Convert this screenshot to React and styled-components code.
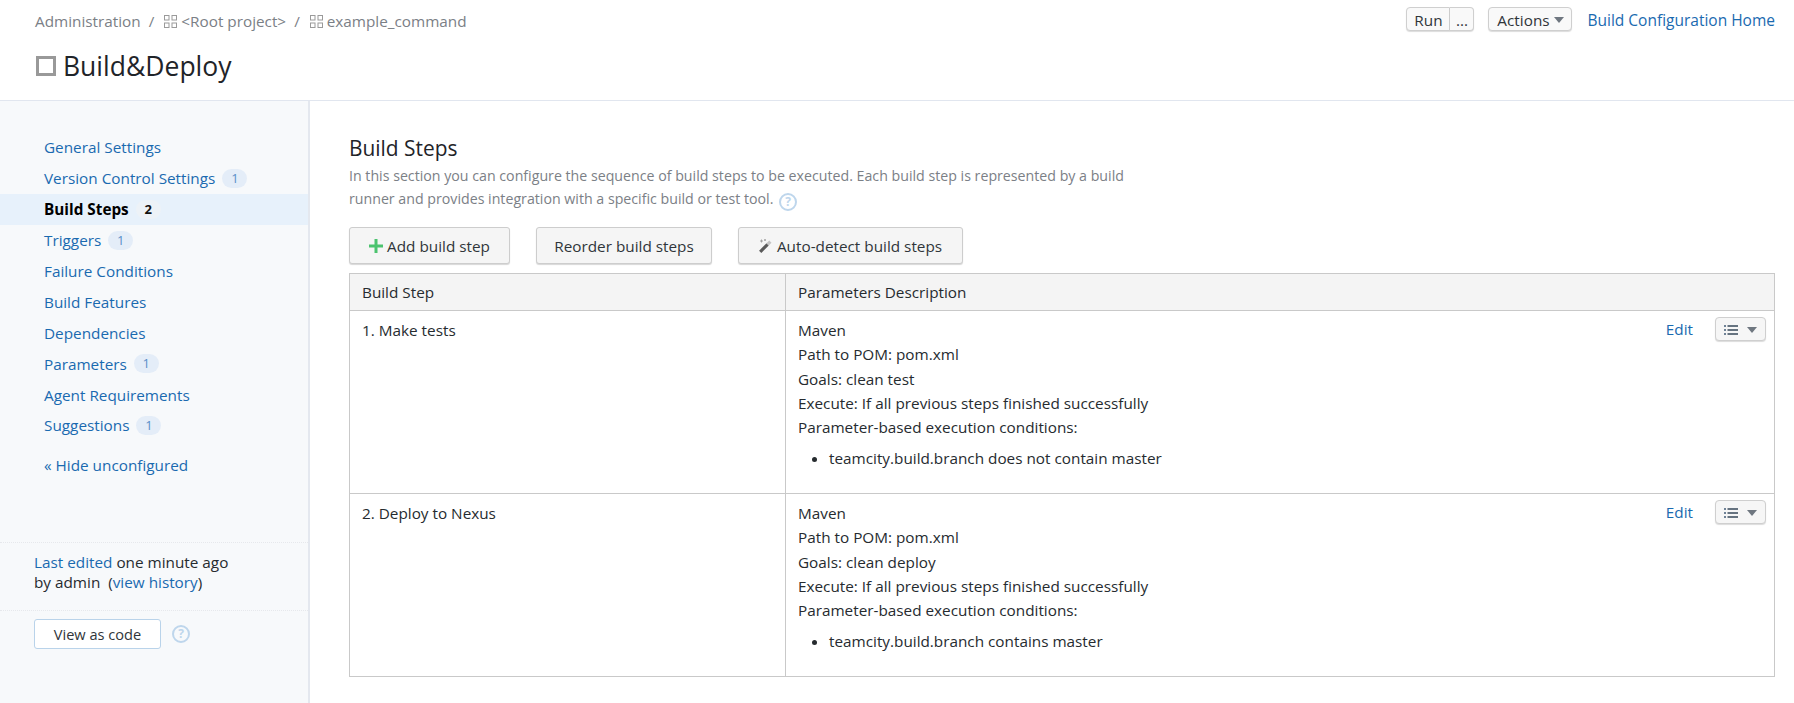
import styled, { createGlobalStyle } from "styled-components";

const GlobalStyle = createGlobalStyle`
  html, body { margin: 0; padding: 0; background: #fff; }
  body {
    font-family: "Open Sans", "Noto Sans", "Liberation Sans", sans-serif;
    font-size: 15.3px;
    color: #262b2f;
  }
  a { color: #1a6ab0; text-decoration: none; }
`;

const navItems = [
  { label: "General Settings" },
  { label: "Version Control Settings", count: 1 },
  { label: "Build Steps", count: 2, active: true },
  { label: "Triggers", count: 1 },
  { label: "Failure Conditions" },
  { label: "Build Features" },
  { label: "Dependencies" },
  { label: "Parameters", count: 1 },
  { label: "Agent Requirements" },
  { label: "Suggestions", count: 1 },
];

const steps = [
  { name: "1. Make tests", goal: "clean test", condition: "teamcity.build.branch does not contain master" },
  { name: "2. Deploy to Nexus", goal: "clean deploy", condition: "teamcity.build.branch contains master" },
];

const Page = styled.div`
  width: 1794px;
  height: 703px;
  display: flex;
  flex-direction: column;
  overflow: hidden;
`;

const Header = styled.header`
  height: 101px;
  flex: none;
  box-sizing: border-box;
  border-bottom: 1px solid #e1e6ef;
  padding: 7px 19px 0 35px;
  display: flex;
  justify-content: space-between;
  align-items: flex-start;
`;

const TitleBlock = styled.div`
  display: flex;
  flex-direction: column;
  padding-top: 4px;
`;

const Crumbs = styled.div`
  display: flex;
  align-items: center;
  height: 20px;
  color: #7b8086;
`;

const CrumbSep = styled.span`
  margin: 0 10px 0 8px;
`;

const ProjectIcon = styled.svg`
  width: 13px;
  height: 13px;
  margin-right: ${(p) => p.$gap}px;
  flex: none;
`;

const PageTitle = styled.h1`
  display: flex;
  align-items: center;
  margin: 16px 0 0;
  font-size: 26.5px;
  line-height: 38px;
  font-weight: 400;
  color: #1f2429;
`;

const TitleBox = styled.span`
  width: 20px;
  height: 20px;
  box-sizing: border-box;
  border: 3px solid #999;
  margin: 0 7px 0 1px;
  flex: none;
`;

const Actions = styled.div`
  display: flex;
  align-items: center;
  height: 24px;
`;

const SmallButton = styled.button`
  height: 24px;
  width: ${(p) => p.$width}px;
  box-sizing: border-box;
  padding: 1px 0 0;
  font: inherit;
  color: #30353a;
  background: #f9f9f9;
  border: 1px solid #cfcfcf;
  border-radius: ${(p) => p.$radius || "4px"};
  box-shadow: 0 1px 1px rgba(0, 0, 0, 0.14);
  display: flex;
  align-items: center;
  justify-content: center;
  gap: 4px;
  ${(p) => p.$joined && "border-left: none;"}
`;

const ButtonGroup = styled.div`
  display: flex;
  margin-right: 14px;
`;

const HomeLink = styled.a`
  margin: 2px 0 0 15px;
  font-size: 15.5px;
`;

const Body = styled.div`
  flex: 1;
  display: flex;
  min-height: 0;
`;

const Sidebar = styled.aside`
  width: 310px;
  flex: none;
  box-sizing: border-box;
  background: #f7f9fb;
  border-right: 2px solid #e4e8ef;
  padding-top: 31px;
  display: flex;
  flex-direction: column;
`;

const NavList = styled.nav`
  display: flex;
  flex-direction: column;
`;

const NavRow = styled.a`
  height: 30.9px;
  display: flex;
  align-items: center;
  gap: 7px;
  padding-left: 44px;
  color: ${(p) => (p.$active ? "#000" : "#1a6ab0")};
  font-weight: ${(p) => (p.$active ? 700 : 400)};
  background: ${(p) => (p.$active ? "#e7f1fb" : "transparent")};
`;

const Count = styled.span`
  min-width: 25px;
  height: 19px;
  box-sizing: border-box;
  border-radius: 10px;
  text-align: center;
  font-size: 13px;
  line-height: 19px;
  font-weight: ${(p) => (p.$active ? 700 : 400)};
  color: ${(p) => (p.$active ? "#111" : "#5a8fc8")};
  background: ${(p) => (p.$active ? "#edf2f7" : "#e4edf8")};
`;

const HideLink = styled.a`
  margin: 9px 0 0 44px;
  height: 31px;
  display: flex;
  align-items: center;
`;

const EditInfo = styled.div`
  margin-top: 61px;
  border-top: 1px dotted #e6e8ec;
  border-bottom: 1px dotted #e6e8ec;
  padding: 9px 0 9px 34px;
  height: 69px;
  box-sizing: border-box;
  line-height: 20px;
`;

const CodeRow = styled.div`
  display: flex;
  align-items: center;
  gap: 11px;
  margin: 8px 0 0 34px;
`;

const CodeButton = styled.button`
  width: 127px;
  height: 30px;
  box-sizing: border-box;
  padding: 0;
  font: inherit;
  font-size: 14.6px;
  color: #30353a;
  background: #fff;
  border: 1px solid #b9d3ea;
  border-radius: 3px;
`;

const HelpIcon = styled.span`
  width: 18px;
  height: 18px;
  box-sizing: border-box;
  border: 2px solid #bed6ec;
  border-radius: 50%;
  display: inline-flex;
  align-items: center;
  justify-content: center;
  font-size: 12px;
  font-weight: 700;
  line-height: 1;
  color: #bed6ec;
  vertical-align: -2px;
  margin: -3px 0 -3px ${(p) => p.$left || 0}px;
`;

const Main = styled.main`
  flex: 1;
  padding: 34px 19px 0 39px;
  min-width: 0;
`;

const Heading = styled.h2`
  margin: 0;
  font-size: 20.9px;
  line-height: 27px;
  font-weight: 400;
  color: #1f2429;
`;

const Intro = styled.p`
  margin: 2px 0 0;
  width: 800px;
  height: 46px;
  color: #7b8086;
  font-size: 14.2px;
  line-height: 23px;
`;

const Toolbar = styled.div`
  display: flex;
  gap: 26px;
  margin-top: 17px;
`;

const ToolButton = styled.button`
  height: 37px;
  width: ${(p) => p.$width}px;
  box-sizing: border-box;
  padding: 0;
  font: inherit;
  color: #30353a;
  background: #f5f5f5;
  border: 1px solid #cdcdcd;
  border-radius: 3px;
  box-shadow: 0 1px 1px rgba(0, 0, 0, 0.16);
  display: flex;
  align-items: center;
  justify-content: center;
  gap: 4px;
`;

const Table = styled.div`
  margin-top: 9px;
  border: 1px solid #c9c9c9;
`;

const Row = styled.div`
  display: grid;
  grid-template-columns: 435px 1fr;
  height: ${(p) => p.$height}px;
  box-sizing: border-box;
  background: ${(p) => (p.$head ? "#f4f4f4" : "#fff")};
  & + & {
    border-top: 1px solid #c9c9c9;
  }
`;

const Cell = styled.div`
  padding: ${(p) => (p.$head ? "0 12px" : "7px 12px 0")};
  display: ${(p) => (p.$head ? "flex" : "block")};
  align-items: center;
  line-height: 24.3px;
  min-width: 0;
  & + & {
    border-left: 1px solid #c9c9c9;
  }
`;

const ParamCell = styled(Cell)`
  display: flex;
  align-items: flex-start;
  justify-content: space-between;
  padding-right: 8px;
`;

const ParamLine = styled.div``;

const Conditions = styled.ul`
  margin: 7px 0 0;
  padding-left: 31px;
`;

const RowActions = styled.div`
  display: flex;
  align-items: center;
  gap: 22px;
  margin-top: -1px;
`;

const MenuButton = styled(SmallButton)`
  gap: 9px;
  background: #f6f6f6;
`;

const ProjectGlyph = ({ gap }) => (
  <ProjectIcon $gap={gap} viewBox="0 0 13 13" fill="none" stroke="#9a9a9a" strokeWidth="1">
    <rect x="0.5" y="0.5" width="4.5" height="4.5" />
    <rect x="8" y="0.5" width="4.5" height="4.5" />
    <rect x="0.5" y="8" width="4.5" height="4.5" />
    <rect x="8" y="8" width="4.5" height="4.5" />
  </ProjectIcon>
);

const Caret = () => (
  <svg width="10" height="6" viewBox="0 0 10 6">
    <path d="M0 0h10L5 6z" fill="#6f7780" />
  </svg>
);

const ListGlyph = () => (
  <svg width="14" height="10" viewBox="0 0 14 10" fill="#667380">
    <rect x="0" y="0" width="2" height="2" fill="#6f8296" />
    <rect x="0" y="4" width="2" height="2" fill="#6f8296" />
    <rect x="0" y="8" width="2" height="2" fill="#6f8296" />
    <rect x="3.5" y="0" width="10.5" height="2" />
    <rect x="3.5" y="4" width="10.5" height="2" />
    <rect x="3.5" y="8" width="10.5" height="2" />
  </svg>
);

const PlusGlyph = () => (
  <svg width="14" height="14" viewBox="0 0 14 14">
    <path d="M5.5 0h3v5.5H14v3H8.5V14h-3V8.5H0v-3h5.5z" fill="#4cc36f" />
  </svg>
);

const WandGlyph = () => (
  <svg width="14" height="14" viewBox="0 0 14 14">
    <path d="M1.2 12.8 L8.6 5.4" stroke="#5a5a5a" strokeWidth="3.2" />
    <path d="M8.6 5.4 L11.4 2.6" stroke="#c4c4c4" strokeWidth="3.2" />
    <path d="M2.5 0.5v3M1 2h3M6 0v2M5 1h2" stroke="#9c9c9c" strokeWidth="0.9" />
  </svg>
);

const StepRow = ({ step }) => (
  <Row $height={183}>
    <Cell>{step.name}</Cell>
    <ParamCell>
      <div>
        <ParamLine>Maven</ParamLine>
        <ParamLine>Path to POM: pom.xml</ParamLine>
        <ParamLine>Goals: {step.goal}</ParamLine>
        <ParamLine>Execute: If all previous steps finished successfully</ParamLine>
        <ParamLine>Parameter-based execution conditions:</ParamLine>
        <Conditions>
          <li>{step.condition}</li>
        </Conditions>
      </div>
      <RowActions>
        <a href="#">Edit</a>
        <MenuButton $width={51}>
          <ListGlyph />
          <Caret />
        </MenuButton>
      </RowActions>
    </ParamCell>
  </Row>
);

export default function App() {
  return (
    <Page>
      <GlobalStyle />
      <Header>
        <TitleBlock>
          <Crumbs>
            Administration
            <CrumbSep>/</CrumbSep>
            <ProjectGlyph gap={4} />
            &lt;Root project&gt;
            <CrumbSep>/</CrumbSep>
            <ProjectGlyph gap={4} />
            example_command
          </Crumbs>
          <PageTitle>
            <TitleBox />
            Build&amp;Deploy
          </PageTitle>
        </TitleBlock>
        <Actions>
          <ButtonGroup>
            <SmallButton $width={44} $radius="4px 0 0 4px">Run</SmallButton>
            <SmallButton $width={24} $radius="0 4px 4px 0" $joined>...</SmallButton>
          </ButtonGroup>
          <SmallButton $width={84}>
            Actions
            <Caret />
          </SmallButton>
          <HomeLink href="#">Build Configuration Home</HomeLink>
        </Actions>
      </Header>
      <Body>
        <Sidebar>
          <NavList>
            {navItems.map((item) => (
              <NavRow key={item.label} href="#" $active={item.active}>
                {item.label}
                {item.count && <Count $active={item.active}>{item.count}</Count>}
              </NavRow>
            ))}
          </NavList>
          <HideLink href="#">« Hide unconfigured</HideLink>
          <EditInfo>
            <a href="#">Last edited</a> one minute ago
            <br />
            by admin &nbsp;(<a href="#">view history</a>)
          </EditInfo>
          <CodeRow>
            <CodeButton>View as code</CodeButton>
            <HelpIcon>?</HelpIcon>
          </CodeRow>
        </Sidebar>
        <Main>
          <Heading>Build Steps</Heading>
          <Intro>
            In this section you can configure the sequence of build steps to be executed. Each build
            step is represented by a build runner and provides integration with a specific build or
            test tool. <HelpIcon $left={2}>?</HelpIcon>
          </Intro>
          <Toolbar>
            <ToolButton $width={161}>
              <PlusGlyph />
              Add build step
            </ToolButton>
            <ToolButton $width={176}>Reorder build steps</ToolButton>
            <ToolButton $width={225}>
              <WandGlyph />
              Auto-detect build steps
            </ToolButton>
          </Toolbar>
          <Table>
            <Row $head $height={36}>
              <Cell $head>Build Step</Cell>
              <Cell $head>Parameters Description</Cell>
            </Row>
            {steps.map((step) => (
              <StepRow key={step.name} step={step} />
            ))}
          </Table>
        </Main>
      </Body>
    </Page>
  );
}
